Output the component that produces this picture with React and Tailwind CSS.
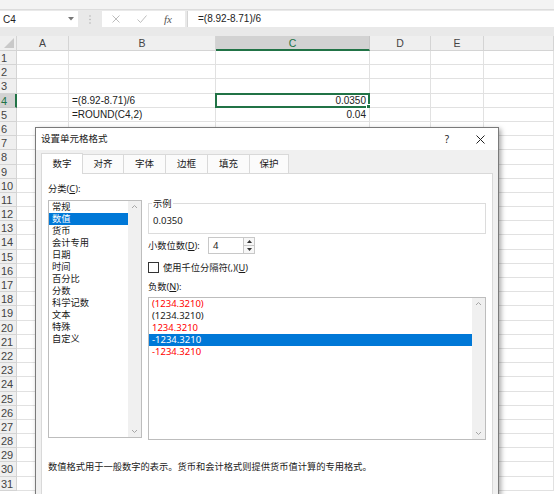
import React from "react";

const cols = [
  { name: "A", w: "w-[52px]" },
  { name: "B", w: "w-[147px]" },
  { name: "C", w: "w-[154px]" },
  { name: "D", w: "w-[61px]" },
  { name: "E", w: "w-[53px]" },
  { name: "", w: "flex-1" },
];

const cells = {
  4: { B: "=(8.92-8.71)/6", C: "0.0350" },
  5: { B: "=ROUND(C4,2)", C: "0.04" },
};

const categories = ["常规", "数值", "货币", "会计专用", "日期", "时间", "百分比", "分数", "科学记数", "文本", "特殊", "自定义"];

const negatives = [
  { text: "(1234.3210)", red: true },
  { text: "(1234.3210)", red: false },
  { text: "1234.3210", red: true },
  { text: "-1234.3210", red: false, selected: true },
  { text: "-1234.3210", red: true },
];

const tabs = [
  { label: "数字", w: "w-[42px]" },
  { label: "对齐", w: "w-[41px]" },
  { label: "字体", w: "w-[42px]" },
  { label: "边框", w: "w-[42px]" },
  { label: "填充", w: "w-[42px]" },
  { label: "保护", w: "w-[39px]" },
];

const Chevron = ({ up }) => (
  <svg width="7" height="5" viewBox="0 0 7 5">
    <polyline
      points={up ? "1,4 3.5,1.5 6,4" : "1,1 3.5,3.5 6,1"}
      fill="none"
      stroke="#a6a6a6"
      strokeWidth="1"
    />
  </svg>
);

const ScrollBar = () => (
  <div className="w-[13px] h-full bg-[#f0f0f0] flex flex-col items-center justify-between py-[3px]">
    <Chevron up />
    <Chevron />
  </div>
);

const Row = ({ n }) => {
  const data = cells[n] || {};
  return (
    <div className="flex h-[14.2px]">
      {n === 4 ? (
        <div className="w-[17px] shrink-0 bg-[#d2d2d2] border-b border-[#c6c6c6] border-r-2 border-r-[#217346] pl-[1px] text-[11px] leading-[14px] text-[#217346]">
          {n}
        </div>
      ) : (
        <div className="w-[17px] shrink-0 bg-[#efefef] border-b border-r border-[#d4d4d4] pl-[1px] text-[11px] leading-[14px] text-[#444]">
          {n}
        </div>
      )}
      {cols.map((c) => (
        <div
          key={c.name}
          className={`${c.w} shrink-0 relative border-b border-r border-[#e1e1e1] px-[3px] text-[10px] leading-[14px] text-[#222] whitespace-nowrap ${c.name === "C" ? "text-right" : ""}`}
        >
          {data[c.name]}
          {n === 4 && c.name === "C" && (
            <div className="absolute -left-px -top-px -right-px -bottom-px border-2 border-[#217346]">
              <div className="absolute -right-[3px] -bottom-[3px] w-[5px] h-[5px] bg-[#217346] border border-white" />
            </div>
          )}
        </div>
      ))}
    </div>
  );
};

export default function App() {
  return (
    <div className="relative w-[554px] h-[494px] overflow-hidden bg-white font-['Liberation_Sans','Noto_Sans_CJK_SC',sans-serif]">
      {/* ribbon edge */}
      <div className="h-[10px] bg-[#f3f3f3] border-b border-[#dcdcdc]" />

      {/* formula bar */}
      <div className="h-[26px] bg-[#e9e9e9] flex items-start pt-[1px]">
        <div className="w-[78px] h-[16px] bg-white flex items-center pl-[3px] pr-[4px] text-[10px] text-[#222]">
          C4
          <svg className="ml-auto" width="6" height="4" viewBox="0 0 6 4">
            <polygon points="0,0 6,0 3,3.5" fill="#777" />
          </svg>
        </div>
        <div className="w-[24px] h-[16px] flex items-center justify-center">
          <svg width="2" height="9" viewBox="0 0 2 9">
            <circle cx="1" cy="1" r="0.8" fill="#b5b5b5" />
            <circle cx="1" cy="4.5" r="0.8" fill="#b5b5b5" />
            <circle cx="1" cy="8" r="0.8" fill="#b5b5b5" />
          </svg>
        </div>
        <div className="w-[83px] h-[16px] bg-white flex items-center pl-[10px] gap-[17px]">
          <svg width="8" height="8" viewBox="0 0 8 8">
            <path d="M0.5 0.5 L7.5 7.5 M7.5 0.5 L0.5 7.5" stroke="#bdbdbd" strokeWidth="1" />
          </svg>
          <svg width="10" height="8" viewBox="0 0 10 8">
            <path d="M0.5 4.5 L3.5 7.5 L9.5 0.5" fill="none" stroke="#bdbdbd" strokeWidth="1" />
          </svg>
          <span className="font-['Liberation_Serif',serif] italic text-[11px] text-[#555] leading-none">fx</span>
        </div>
        <div className="flex-1 h-[16px] bg-white ml-[2px] pl-[10px] text-[10px] leading-[16px] text-[#222] border-l border-[#d4d4d4]">
          =(8.92-8.71)/6
        </div>
      </div>

      {/* column headers */}
      <div className="flex h-[15px]">
        <div className="w-[17px] shrink-0 bg-[#efefef] border-r border-b border-[#d4d4d4] flex items-end justify-end pr-[2px] pb-[2px]">
          <svg width="10" height="10" viewBox="0 0 10 10">
            <polygon points="10,0 10,10 0,10" fill="#c9c9c9" />
          </svg>
        </div>
        {cols.map((c) =>
          c.name === "C" ? (
            <div key={c.name} className={`${c.w} shrink-0 bg-[#d2d2d2] border-r border-[#c6c6c6] border-b-2 border-b-[#217346] text-center text-[10.5px] leading-[14px] text-[#217346]`}>
              {c.name}
            </div>
          ) : (
            <div key={c.name || "F"} className={`${c.w} shrink-0 bg-[#efefef] border-r border-b border-[#d4d4d4] text-center text-[10.5px] leading-[14px] text-[#444]`}>
              {c.name}
            </div>
          )
        )}
      </div>

      {/* rows */}
      <div>
        {Array.from({ length: 31 }, (_, i) => (
          <Row key={i} n={i + 1} />
        ))}
      </div>

      {/* Format Cells dialog */}
      <div className="absolute left-[35px] top-[127px] w-[464px] h-[390px] bg-[#f0f0f0] border border-[#7a7a7a] shadow-[2px_2px_5px_rgba(0,0,0,0.35)] font-['Noto_Sans','Noto_Sans_CJK_SC',sans-serif] text-[9.25px] text-[#1a1a1a]">
        <div className="h-[22px] bg-white flex items-center pl-[5px]">
          <span className="text-[9.5px]">设置单元格格式</span>
          <span className="ml-auto text-[10px] text-[#222]">?</span>
          <svg className="ml-[27px] mr-[13px]" width="9" height="9" viewBox="0 0 9 9">
            <path d="M0.5 0.5 L8.5 8.5 M8.5 0.5 L0.5 8.5" stroke="#222" strokeWidth="1" />
          </svg>
        </div>

        <div className="px-[5px] pt-[3px]">
          <div className="flex items-end h-[20px] relative z-10">
            {tabs.map((t, i) =>
              i === 0 ? (
                <div key={t.label} className={`${t.w} h-[21px] -mb-px bg-white border border-b-0 border-[#d9d9d9] flex items-center justify-center text-[9.5px]`}>
                  {t.label}
                </div>
              ) : (
                <div key={t.label} className={`${t.w} h-[19px] bg-[#fbfbfb] border-t border-r border-[#d9d9d9] flex items-center justify-center text-[9.5px]`}>
                  {t.label}
                </div>
              )
            )}
          </div>

          <div className="h-[350px] bg-white border border-[#d9d9d9] px-[6px] pt-[8px]">
            <div className="flex gap-[6px]">
              {/* category */}
              <div className="w-[94px]">
                <div className="h-[13px] leading-[13px]">
                  分类(<span className="underline">C</span>):
                </div>
                <div className="mt-[5px] h-[238px] border border-[#bdbdbd] flex">
                  <div className="flex-1">
                    {categories.map((c) =>
                      c === "数值" ? (
                        <div key={c} className="h-[12px] leading-[12px] pl-[3px] bg-[#0078d7] text-white">
                          {c}
                        </div>
                      ) : (
                        <div key={c} className="h-[12px] leading-[12px] pl-[3px]">
                          {c}
                        </div>
                      )
                    )}
                  </div>
                  <ScrollBar />
                </div>
              </div>

              {/* right side */}
              <div className="flex-1 mt-[21px]">
                <div className="relative h-[31px] border border-[#dcdcdc] pl-[4px] pt-[11px]">
                  <span className="absolute left-[3px] -top-[5px] bg-white px-[1px] leading-[10px]">示例</span>
                  <div className="text-[9.5px] leading-[12px]">0.0350</div>
                </div>

                <div className="mt-[3px] h-[17px] flex items-center">
                  <span className="w-[60px]">
                    小数位数(<span className="underline">D</span>):
                  </span>
                  <div className="w-[47px] h-[17px] border border-[#c8c8c8] flex">
                    <div className="flex-1 pl-[4px] text-[9.5px] leading-[15px]">4</div>
                    <div className="w-[11px] border-l border-[#c8c8c8] bg-[#f7f7f7] flex flex-col">
                      <div className="flex-1 flex items-center justify-center border-b border-[#c8c8c8]">
                        <svg width="5" height="3" viewBox="0 0 5 3">
                          <polygon points="0,3 5,3 2.5,0" fill="#333" />
                        </svg>
                      </div>
                      <div className="flex-1 flex items-center justify-center">
                        <svg width="5" height="3" viewBox="0 0 5 3">
                          <polygon points="0,0 5,0 2.5,3" fill="#333" />
                        </svg>
                      </div>
                    </div>
                  </div>
                </div>

                <div className="mt-[8px] h-[11px] flex items-center gap-[4px]">
                  <div className="w-[11px] h-[11px] border border-[#333] bg-white" />
                  <span className="leading-[11px]">
                    使用千位分隔符(,)(<span className="underline">U</span>)
                  </span>
                </div>

                <div className="mt-[8px] h-[12px] leading-[12px]">
                  负数(<span className="underline">N</span>):
                </div>

                <div className="mt-[4px] h-[143px] border border-[#bdbdbd] flex">
                  <div className="flex-1 text-[9.5px]">
                    {negatives.map((n, i) =>
                      n.selected ? (
                        <div key={i} className="h-[12px] leading-[12px] pl-[3px] bg-[#0078d7] text-white">
                          {n.text}
                        </div>
                      ) : (
                        <div key={i} className={`h-[12px] leading-[12px] pl-[3px] ${n.red ? "text-[#ff0000]" : "text-[#1a1a1a]"}`}>
                          {n.text}
                        </div>
                      )
                    )}
                  </div>
                  <ScrollBar />
                </div>
              </div>
            </div>

            <p className="mt-[21px] leading-[12px]">
              数值格式用于一般数字的表示。货币和会计格式则提供货币值计算的专用格式。
            </p>
          </div>
        </div>
      </div>
    </div>
  );
}
